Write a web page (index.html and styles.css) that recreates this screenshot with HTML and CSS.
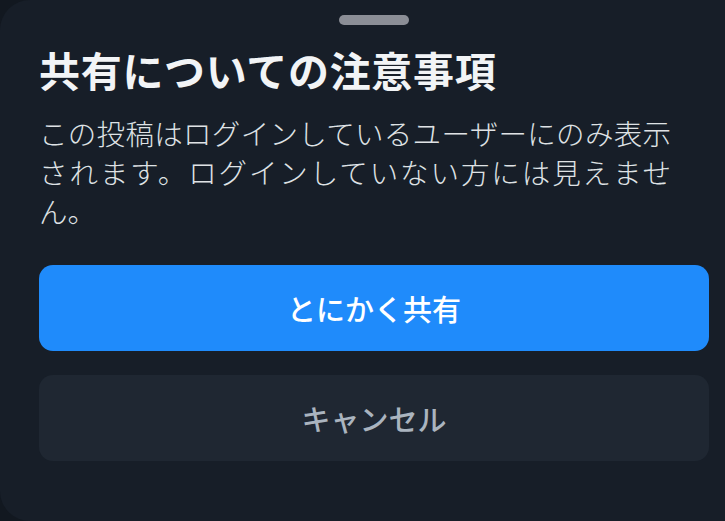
FILE: index.html
```html
<!DOCTYPE html>
<html lang="ja">
<head>
	<meta charset="utf-8">
	<title>共有についての注意事項</title>
	<link rel="stylesheet" href="styles.css">
</head>
<body>
	<div class="sheet">
		<div class="handle"></div>
		<h1 class="title">共有についての注意事項</h1>
		<p class="notice">この投稿はログインしているユーザーにのみ表示されます。ログインしていない方には見えません。</p>
		<div class="actions">
			<button type="button" class="btn btn-share">とにかく共有</button>
			<button type="button" class="btn btn-cancel">キャンセル</button>
		</div>
	</div>
</body>
</html>
```

FILE: styles.css
```css
html, body{
	margin: 0;
	height: 100%;
	background-color: #121820;
}
body{
	font-family: "Noto Sans CJK JP", "Noto Sans", sans-serif;
	overflow: hidden;
}
.sheet{
	box-sizing: border-box;
	height: 100%;
	background-color: #171e28;
	border-radius: 30px 0 0 30px;
	padding: 15px 16px 0 39px;
}
.handle{
	width: 70px;
	height: 10px;
	border-radius: 5px;
	background-color: #8b8e96;
	margin: 0 auto;
}
.title{
	margin: 18px 0 0 0;
	font-size: 41px;
	line-height: 53px;
	font-weight: 700;
	letter-spacing: 0.7px;
	color: #f2f4f6;
}
.notice{
	max-width: 632px;
	margin: 17px 0 0 0;
	font-size: 28.5px;
	line-height: 39px;
	font-weight: 300;
	text-align: justify;
	color: #dfe2e5;
}
.actions{
	display: flex;
	flex-direction: column;
	gap: 24px;
	margin-top: 35px;
}
.btn{
	height: 86px;
	border: none;
	border-radius: 14px;
	font-family: inherit;
	font-size: 29px;
	font-weight: 500;
}
.btn-share{
	background-color: #1f8bfb;
	color: #ffffff;
}
.btn-cancel{
	background-color: #1f2732;
	color: #aab4bf;
}
```
